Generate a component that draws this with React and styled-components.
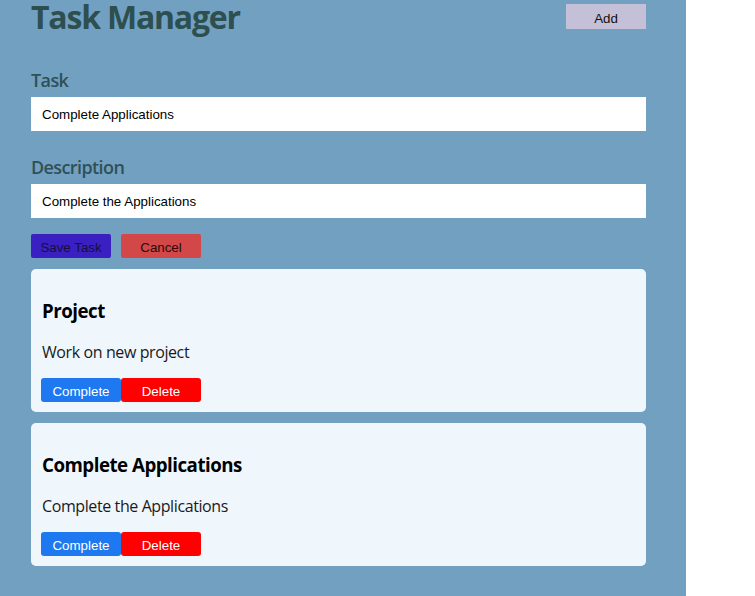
import React from 'react'
import styled, { createGlobalStyle } from 'styled-components'

const GlobalStyle = createGlobalStyle`
  body {
    margin: 0;
    background: #fff;
    font-family: "Open Sans", "Liberation Sans", sans-serif;
  }
  * { box-sizing: border-box; }
`;

const Panel = styled.div`
  width: 686px;
  min-height: 100vh;
  background-color: #72a0c1;
  padding: 1px 40px 28px 31px;
`;

const Header = styled.div`
  display: flex;
  justify-content: space-between;
  align-items: flex-start;
`;

const Title = styled.h1`
  margin: 0;
  font-size: 32px;
  line-height: 32px;
  font-weight: 700;
  letter-spacing: -1.2px;
  color: #2d4f50;
`;

const AddButton = styled.button`
  margin-top: 3px;
  width: 80px;
  height: 25px;
  border: none;
  background-color: #c3c0d8;
  font-family: "Liberation Sans", Arial, sans-serif;
  font-size: 13.33px;
  color: #111;
  padding: 3px 0 0;
`;

const Form = styled.form`
  margin-top: 35px;
`;

const Field = styled.div`
  & + & {
    margin-top: 24px;
  }
`;

const Label = styled.label`
  display: block;
  font-size: 18px;
  line-height: 24px;
  font-weight: 600;
  letter-spacing: -0.6px;
  color: #2f5057;
  margin-bottom: 5px;
`;

const Input = styled.input`
  display: block;
  width: 100%;
  height: 34px;
  border: none;
  outline: none;
  padding: 0 10px 0 11px;
  background: #fff;
  font-family: "Liberation Sans", Arial, sans-serif;
  font-size: 13.33px;
  color: #000;
`;

const Actions = styled.div`
  display: flex;
  gap: 10px;
  margin-top: 16px;
`;

const FormButton = styled.button`
  width: 80px;
  height: 24px;
  border: none;
  border-radius: 2px;
  background-color: ${({ $bg }) => $bg};
  color: ${({ $fg }) => $fg};
  font-family: "Liberation Sans", Arial, sans-serif;
  font-size: 13.33px;
  padding: 3px 0 0;
`;

const List = styled.div`
  display: flex;
  flex-direction: column;
  gap: 11px;
  margin-top: 11px;
`;

const Card = styled.div`
  background-color: #eff7fd;
  border-radius: 5px;
  padding: 10px;
`;

const CardTitle = styled.h3`
  margin: 19px 0 18px 1px;
  font-size: 18.72px;
  line-height: 25px;
  font-weight: 700;
  letter-spacing: -0.5px;
  color: #000;
`;

const CardText = styled.p`
  margin: 0 0 15px 1px;
  font-size: 16px;
  line-height: 22px;
  letter-spacing: -0.4px;
  color: #1a1a1a;
`;

const CardButtons = styled.div`
  display: flex;
`;

const CardButton = styled.button`
  width: 80px;
  height: 24px;
  border: none;
  border-radius: 3px;
  background-color: ${({ $bg }) => $bg};
  color: #fff;
  font-family: "Liberation Sans", Arial, sans-serif;
  font-size: 13.33px;
  padding: 3px 0 0;
`;

const tasks = [
  { title: 'Project', text: 'Work on new project' },
  { title: 'Complete Applications', text: 'Complete the Applications' },
];

export default function App() {
  return (
    <>
      <GlobalStyle />
      <Panel>
        <Header>
          <Title>Task Manager</Title>
          <AddButton type="button">Add</AddButton>
        </Header>
        <Form onSubmit={(e) => e.preventDefault()}>
          <Field>
            <Label>Task</Label>
            <Input defaultValue="Complete Applications" />
          </Field>
          <Field>
            <Label>Description</Label>
            <Input defaultValue="Complete the Applications" />
          </Field>
          <Actions>
            <FormButton type="submit" $bg="#3a1fc1" $fg="#141040">Save Task</FormButton>
            <FormButton type="button" $bg="#d24747" $fg="#2a0a0a">Cancel</FormButton>
          </Actions>
        </Form>
        <List>
          {tasks.map((t) => (
            <Card key={t.title}>
              <CardTitle>{t.title}</CardTitle>
              <CardText>{t.text}</CardText>
              <CardButtons>
                <CardButton $bg="#1e78ef">Complete</CardButton>
                <CardButton $bg="#ff0000">Delete</CardButton>
              </CardButtons>
            </Card>
          ))}
        </List>
      </Panel>
    </>
  )
}
